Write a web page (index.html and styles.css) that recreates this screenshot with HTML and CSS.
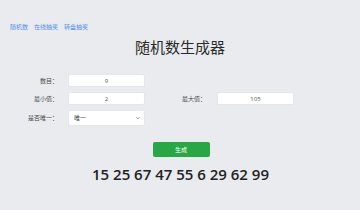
FILE: index.html
```html
<!DOCTYPE html>
<html lang="zh-CN">
<head>
<meta charset="utf-8">
<title>随机数生成器</title>
<link rel="stylesheet" href="styles.css">
</head>
<body>
<nav class="nav">
  <a href="#" class="nav-link">随机数</a>
  <a href="#" class="nav-link">在线抽奖</a>
  <a href="#" class="nav-link">转盘抽奖</a>
</nav>
<h1 class="title">随机数生成器</h1>
<form class="form">
  <label class="label">数目：</label>
  <input class="field" type="text" value="9">
  <span></span><span></span>
  <label class="label">最小值：</label>
  <input class="field" type="text" value="2">
  <label class="label label-right">最大值：</label>
  <input class="field" type="text" value="105">
  <label class="label">是否唯一：</label>
  <div class="select-wrap">
    <select class="select"><option>唯一</option><option>不唯一</option></select>
    <svg class="chevron" viewBox="0 0 8 8" width="4" height="4"><path d="M1 2.5 L4 5.5 L7 2.5" fill="none" stroke="#555" stroke-width="1.3"/></svg>
  </div>
</form>
<div class="actions"><button class="btn" type="button">生成</button></div>
<div class="result">15 25 67 47 55 6 29 62 99</div>
</body>
</html>
```
FILE: styles.css
```css
html, body {
  margin: 0;
  padding: 0;
}
body {
  background: #e9ebee;
  font-family: "Open Sans", "Noto Sans CJK SC", sans-serif;
  color: #333;
  width: 360px;
  height: 210px;
  overflow: hidden;
}
.nav {
  display: flex;
  gap: 6px;
  padding: 24px 0 0 10px;
  font-size: 6px;
  line-height: 6px;
}
.nav-link {
  color: #4a90f5;
  text-decoration: none;
}
.title {
  margin: 9px 0 0;
  font-size: 15px;
  line-height: 16px;
  font-weight: 400;
  text-align: center;
  color: #2b2b2b;
  font-family: "Noto Sans CJK SC", sans-serif;
}
.form {
  display: grid;
  grid-template-columns: 68px 77px 72px 77px;
  grid-auto-rows: auto;
  row-gap: 5px;
  align-items: center;
  margin-top: 19px;
}
.label {
  display: block;
  text-align: right;
  padding-right: 10px;
  font-size: 6px;
  line-height: 8px;
  color: #4a4a4a;
  font-family: "Noto Sans CJK SC", sans-serif;
}
.label-right {
  padding-right: 11px;
}
.field {
  display: block;
  box-sizing: border-box;
  width: 77px;
  height: 13px;
  margin: 0;
  padding: 0 4px;
  border: 1px solid #e3e6ea;
  border-radius: 2px;
  background: #fff;
  text-align: center;
  font-size: 6px;
  line-height: 11px;
  color: #555;
  font-family: "Open Sans", "Noto Sans CJK SC", sans-serif;
}
.select-wrap {
  position: relative;
  width: 77px;
  height: 16px;
  line-height: 0;
}
.select {
  display: block;
  appearance: none;
  -webkit-appearance: none;
  box-sizing: border-box;
  width: 77px;
  height: 16px;
  margin: 0;
  padding: 0 0 0 5px;
  border: 1px solid #e3e6ea;
  border-radius: 2px;
  background: #fff;
  font-size: 6px;
  line-height: 14px;
  color: #444;
  font-family: "Noto Sans CJK SC", sans-serif;
}
.chevron {
  position: absolute;
  right: 5px;
  top: 6px;
  pointer-events: none;
}
.actions {
  display: flex;
  justify-content: center;
  margin-top: 16px;
  padding-left: 2px;
}
.btn {
  display: block;
  width: 57px;
  height: 15px;
  padding: 0;
  border: 0;
  border-radius: 2px;
  background: #28a745;
  color: #fff;
  font-size: 6px;
  font-family: "Noto Sans CJK SC", sans-serif;
}
.result {
  margin-top: 7px;
  text-align: center;
  font-size: 15px;
  line-height: 20px;
  font-weight: 600;
  color: #222;
  padding-left: 1px;
}
```
